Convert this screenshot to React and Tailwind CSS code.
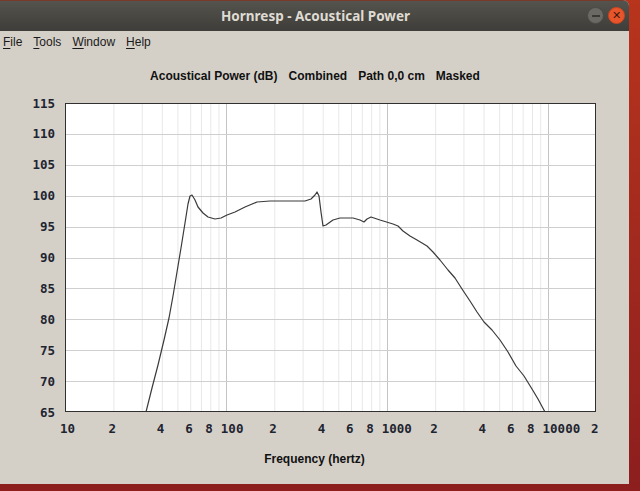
const X0 = 65
const X1 = 596
const Y0 = 103
const Y1 = 412
const DEC = (X1 - X0) / Math.log10(2000)

const fx = (f) => X0 + DEC * Math.log10(f / 10)
const fy = (db) => Y0 + ((115 - db) / 50) * (Y1 - Y0)

const curve = [
  [146, 412], [152, 388], [158, 365], [164, 340], [169, 318], [173, 296], [177, 272],
  [181, 248], [185, 223], [188, 204], [190, 196], [192, 195], [195, 200], [198, 207],
  [203, 213], [208, 217], [215, 219], [221, 218], [227, 215], [235, 212], [245, 207],
  [257, 202], [270, 201], [290, 201], [305, 201], [311, 199], [315, 195], [317, 192],
  [319, 196], [321, 212], [323, 226], [326, 225], [333, 220], [340, 218], [353, 218],
  [360, 220], [364, 222], [367, 219], [371, 217], [380, 220], [393, 224], [398, 226],
  [403, 231], [410, 236], [417, 240], [427, 246], [433, 252], [440, 260], [448, 270],
  [455, 278], [462, 289], [470, 301], [477, 312], [484, 322], [492, 330], [500, 340],
  [508, 352], [516, 366], [524, 376], [532, 389], [538, 399], [545, 412],
]

const xLabels = [
  [10, '10'], [20, '2'], [40, '4'], [60, '6'], [80, '8'], [100, '100'], [200, '2'],
  [400, '4'], [600, '6'], [800, '8'], [1000, '1000'], [2000, '2'], [4000, '4'],
  [6000, '6'], [8000, '8'], [10000, '10000'], [20000, '2'],
]

function minorFreqs() {
  const out = []
  for (const d of [10, 100, 1000, 10000]) {
    for (let m = 2; m <= 9; m++) {
      const f = d * m
      if (f < 20000) out.push(f)
    }
  }
  return out
}

function Chart() {
  const dbs = [65, 70, 75, 80, 85, 90, 95, 100, 105, 110, 115]
  return (
    <svg width="630" height="360" viewBox="0 84 630 360" className="block">
      <defs>
        <clipPath id="plot">
          <rect x={X0} y={Y0} width={X1 - X0} height={Y1 - Y0} />
        </clipPath>
      </defs>
      <rect x={X0} y={Y0} width={X1 - X0} height={Y1 - Y0} fill="#ffffff" />
      {minorFreqs().map((f) => (
        <line key={f} x1={fx(f) + 0.5} x2={fx(f) + 0.5} y1={Y0} y2={Y1} stroke="#e8e8e8" strokeWidth="1" />
      ))}
      {[100, 1000, 10000].map((f) => (
        <line key={f} x1={Math.round(fx(f)) + 0.5} x2={Math.round(fx(f)) + 0.5} y1={Y0} y2={Y1} stroke="#c4c4c4" strokeWidth="1" />
      ))}
      {dbs.slice(1, -1).map((d) => (
        <line key={d} x1={X0} x2={X1} y1={Math.round(fy(d)) + 0.5} y2={Math.round(fy(d)) + 0.5} stroke="#cfcfcf" strokeWidth="1" />
      ))}
      <polyline
        points={curve.map((p) => p.join(',')).join(' ')}
        fill="none"
        stroke="#3a3a3a"
        strokeWidth="1.2"
        strokeLinejoin="round"
        clipPath="url(#plot)"
      />
      <rect x={X0 + 0.5} y={Y0 + 0.5} width={X1 - X0 - 1} height={Y1 - Y0 - 1} fill="none" stroke="#303030" strokeWidth="1" />
      <g fontFamily="'DejaVu Sans Mono', 'Liberation Mono', monospace" fontWeight="bold" fontSize="12.5" fill="#1e2430">
        {dbs.map((d) => (
          <text key={d} x="55" y={fy(d) + 4.5} textAnchor="end">
            {d}
          </text>
        ))}
        {xLabels.map(([f, t]) => (
          <text key={f} x={fx(f) - 5} y="433">
            {t}
          </text>
        ))}
      </g>
    </svg>
  )
}

function MenuItem({ first, rest }) {
  return (
    <span>
      <span className="underline underline-offset-2">{first}</span>
      {rest}
    </span>
  )
}

export default function App() {
  return (
    <div className="w-[640px] h-[491px] overflow-hidden bg-gradient-to-b from-[#b8341c] to-[#8c1e1e] flex">
      <div className="w-[629px] h-[484px] bg-[#d4d0c8] flex flex-col rounded-tr-[6px] overflow-hidden">
        <div className="h-[31px] shrink-0 bg-gradient-to-b from-[#55534d] to-[#3e3d39] border-t border-[#7a3a2a] flex items-center relative">
          <div className="flex-1 text-center text-[13.5px] font-bold text-[#dfdbd2] font-['Noto_Sans',sans-serif] pl-[2px]">
            Hornresp - Acoustical Power
          </div>
          <div className="absolute right-[4px] top-[6px] flex gap-[4px]">
            <div className="w-[17px] h-[17px] rounded-full bg-[#6a6964] border border-[#4a4945] flex items-center justify-center">
              <div className="w-[8px] h-[2px] bg-[#3a3935]" />
            </div>
            <div className="w-[17px] h-[17px] rounded-full bg-[#e9552a] border border-[#c8441e] flex items-center justify-center text-[#3a1a10] text-[11px] font-bold leading-none font-['DejaVu_Sans',sans-serif]">
              ✕
            </div>
          </div>
        </div>
        <div className="h-[22px] shrink-0 flex items-center gap-[11px] pl-[3px] text-[12px] text-[#1a1a1a] font-['Liberation_Sans',sans-serif]">
          <MenuItem first="F" rest="ile" />
          <MenuItem first="T" rest="ools" />
          <MenuItem first="W" rest="indow" />
          <MenuItem first="H" rest="elp" />
        </div>
        <div className="mt-[15px] h-[16px] flex justify-center items-center gap-[11px] pl-[1px] text-[12px] font-bold text-[#111] font-['Liberation_Sans',sans-serif]">
          <span>Acoustical Power (dB)</span>
          <span>Combined</span>
          <span>Path 0,0 cm</span>
          <span>Masked</span>
        </div>
        <Chart />
        <div className="mt-[7px] h-[16px] flex justify-center items-center text-[12px] font-bold text-[#111] font-['Liberation_Sans',sans-serif]">
          Frequency (hertz)
        </div>
      </div>
    </div>
  )
}
